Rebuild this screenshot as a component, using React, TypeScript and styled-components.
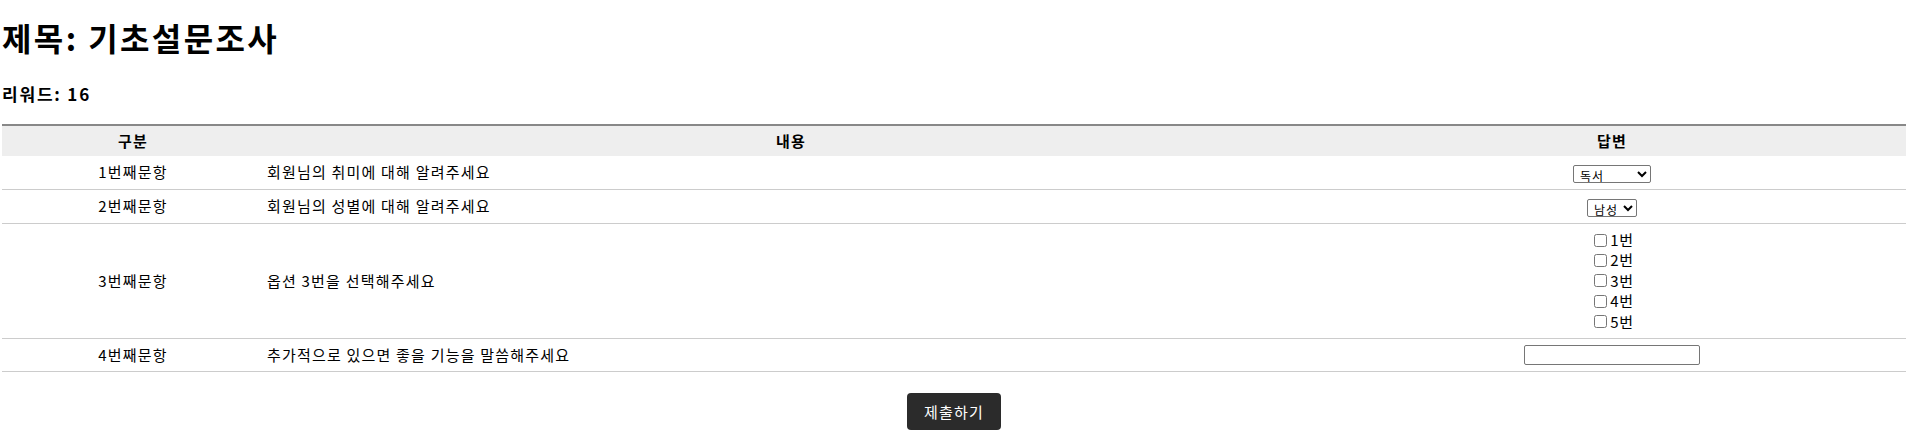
import React, { useState } from "react";
import styled, { createGlobalStyle } from "styled-components";

const FONT = `"Noto Sans CJK KR", "Noto Sans", sans-serif`;

const GlobalStyle = createGlobalStyle`
  body {
    margin: 0;
    background: #fff;
    color: #000;
    font-family: ${FONT};
  }
`;

const Page = styled.div`
  padding: 0 8px 20px 2px;
`;

const Title = styled.h1`
  margin: 18px 0 0;
  font-size: 32px;
  line-height: 38px;
  font-weight: 700;
  letter-spacing: 2.4px;
`;

const Reward = styled.h4`
  margin: 27px 0 19px;
  font-size: 17px;
  line-height: 22px;
  font-weight: 700;
  letter-spacing: 1.8px;
`;

const SurveyTable = styled.table`
  width: 100%;
  border-collapse: collapse;
  font-size: 15px;
  line-height: 20px;
  letter-spacing: 1.2px;
`;

const HeadCell = styled.th<{ $w: number }>`
  width: ${(p) => p.$w}px;
  height: 31px;
  padding: 0 6px;
  box-sizing: border-box;
  background: #eee;
  border-top: 2px solid #888;
  font-weight: 700;
  text-align: center;
`;

const Row = styled.tr`
  border-bottom: 1px solid #ccc;
`;

const Cell = styled.td<{ $align?: "left" | "center" }>`
  padding: 6px 3px;
  height: 20px;
  text-align: ${(p) => p.$align ?? "center"};
  vertical-align: middle;
`;

const Select = styled.select<{ $w: number }>`
  width: ${(p) => p.$w}px;
  height: 18px;
  padding: 0 2px;
  font-family: ${FONT};
  font-size: 12px;
  letter-spacing: 1px;
  border: 1px solid #767676;
  border-radius: 2px;
  background: #fff;
  vertical-align: middle;
`;

const OptionList = styled.div`
  display: inline-flex;
  flex-direction: column;
  align-items: flex-start;
  vertical-align: middle;
`;

const OptionLabel = styled.label`
  display: flex;
  align-items: center;
  height: 20.4px;
  letter-spacing: 0.6px;
`;

const Check = styled.input`
  width: 13px;
  height: 13px;
  margin: 0 3px 0 4px;
`;

const TextInput = styled.input`
  display: block;
  box-sizing: border-box;
  width: 176px;
  height: 20px;
  margin: 0 auto;
  border: 1px solid #767676;
  border-radius: 2px;
  font-family: ${FONT};
  font-size: 13px;
`;

const SubmitRow = styled.div`
  display: flex;
  justify-content: center;
  margin-top: 21px;
`;

const SubmitButton = styled.button`
  width: 94px;
  height: 37px;
  border: none;
  border-radius: 4px;
  background: #2b2b2b;
  color: #fff;
  font-family: ${FONT};
  font-size: 15px;
  letter-spacing: 1.2px;
  cursor: pointer;
`;

export default function App() {
  const [hobby, setHobby] = useState("독서");
  const [gender, setGender] = useState("남성");
  const [picked, setPicked] = useState<number[]>([]);
  const [memo, setMemo] = useState("");

  const toggle = (n: number) =>
    setPicked((prev) => (prev.includes(n) ? prev.filter((v) => v !== n) : [...prev, n]));

  return (
    <Page>
      <GlobalStyle />
      <Title>제목: 기초설문조사</Title>
      <Reward>리워드: 16</Reward>

      <SurveyTable>
        <thead>
          <tr>
            <HeadCell $w={262}>구분</HeadCell>
            <HeadCell $w={1054}>내용</HeadCell>
            <HeadCell $w={588}>답변</HeadCell>
          </tr>
        </thead>
        <tbody>
          <Row>
            <Cell>1번째문항</Cell>
            <Cell $align="left">회원님의 취미에 대해 알려주세요</Cell>
            <Cell>
              <Select $w={78} value={hobby} onChange={(e) => setHobby(e.target.value)}>
                <option>독서</option>
                <option>운동</option>
                <option>영화감상</option>
              </Select>
            </Cell>
          </Row>
          <Row>
            <Cell>2번째문항</Cell>
            <Cell $align="left">회원님의 성별에 대해 알려주세요</Cell>
            <Cell>
              <Select $w={50} value={gender} onChange={(e) => setGender(e.target.value)}>
                <option>남성</option>
                <option>여성</option>
              </Select>
            </Cell>
          </Row>
          <Row>
            <Cell>3번째문항</Cell>
            <Cell $align="left">옵션 3번을 선택해주세요</Cell>
            <Cell>
              <OptionList>
                {[1, 2, 3, 4, 5].map((n) => (
                  <OptionLabel key={n}>
                    <Check type="checkbox" checked={picked.includes(n)} onChange={() => toggle(n)} />
                    {n}번
                  </OptionLabel>
                ))}
              </OptionList>
            </Cell>
          </Row>
          <Row>
            <Cell>4번째문항</Cell>
            <Cell $align="left">추가적으로 있으면 좋을 기능을 말씀해주세요</Cell>
            <Cell>
              <TextInput value={memo} onChange={(e) => setMemo(e.target.value)} />
            </Cell>
          </Row>
        </tbody>
      </SurveyTable>

      <SubmitRow>
        <SubmitButton type="button">제출하기</SubmitButton>
      </SubmitRow>
    </Page>
  );
}
